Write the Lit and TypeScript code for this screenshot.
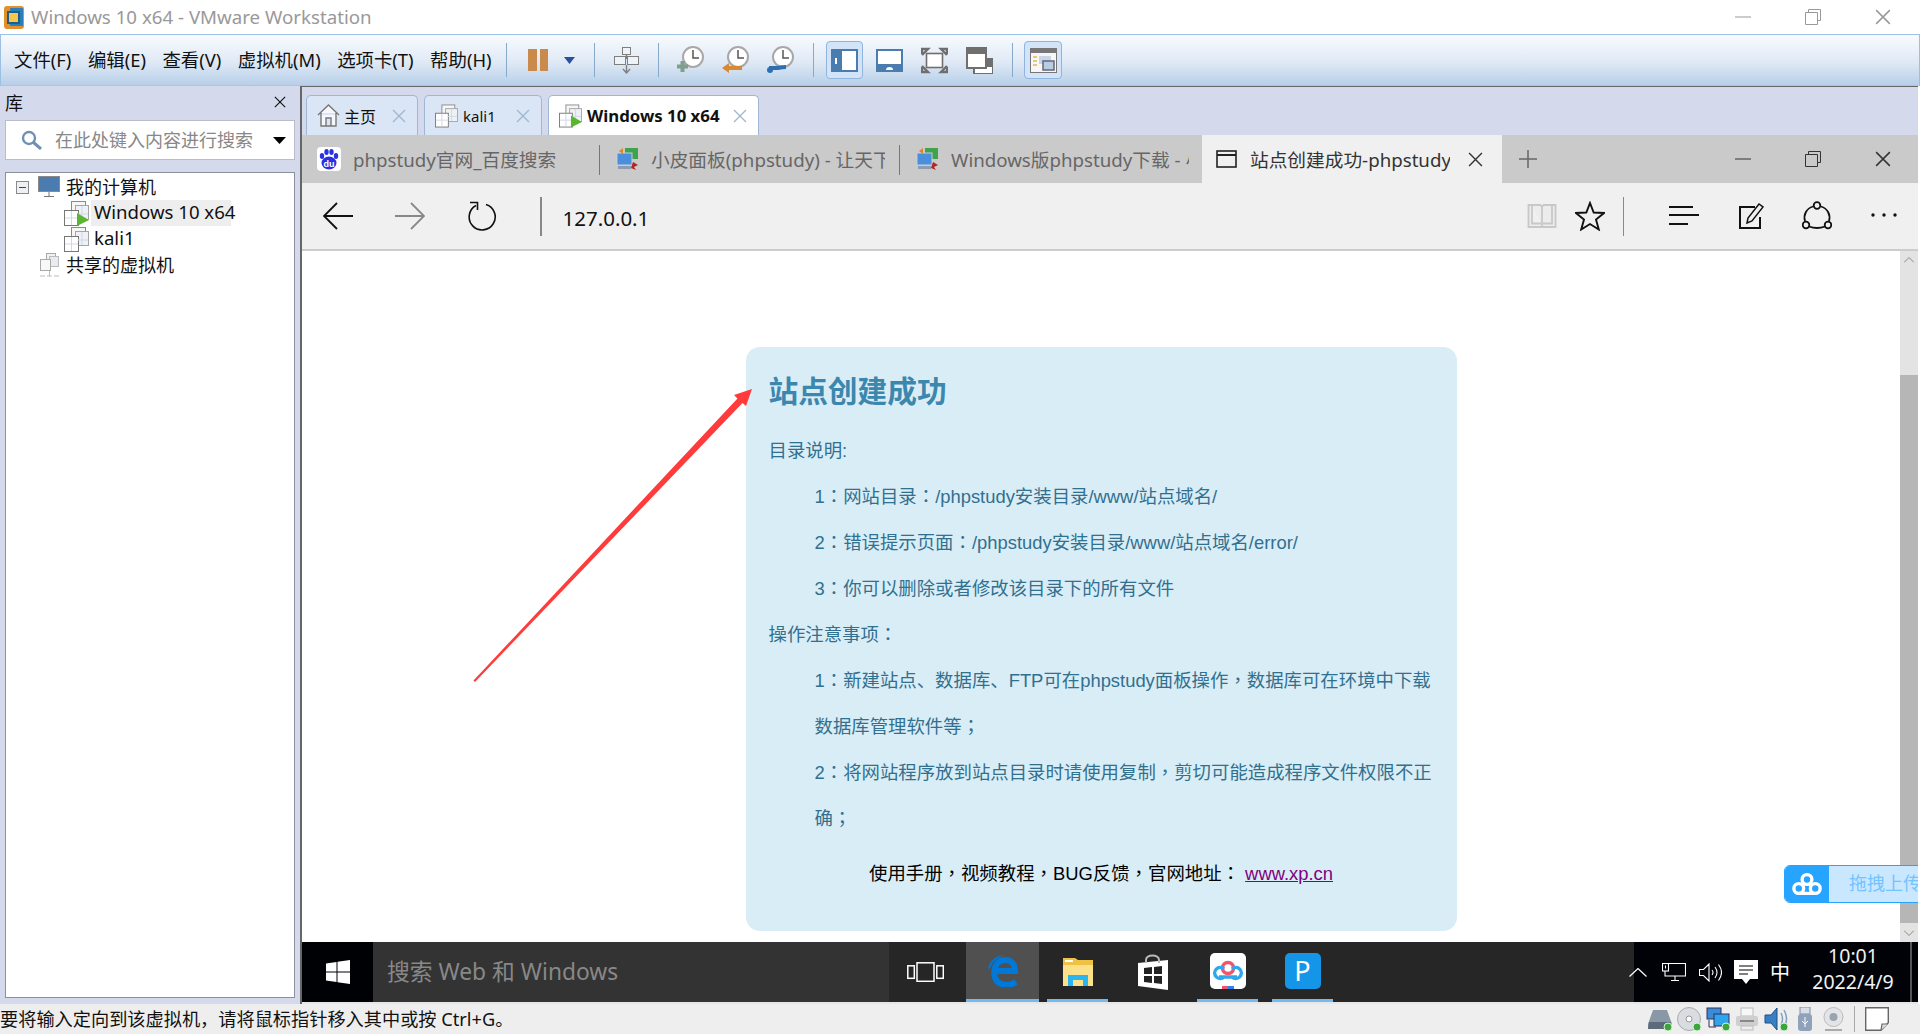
import { LitElement, html, svg, css } from 'lit';
import { customElement } from 'lit/decorators.js';

const vmIcon = (play = false) => html`<svg class="vm-ico" viewBox="0 0 25 25">
  <rect x="7.5" y="0.5" width="14" height="15" fill="#f6f6f6" stroke="#8a8a8a"/>
  <rect x="11.5" y="4.5" width="13" height="14" fill="#eef1f6" stroke="#a5a5a5"/>
  <rect x="0.5" y="9.5" width="14" height="15" fill="#fff" stroke="#777"/>
  <path d="M7.5 10v14M1 17h13M14 13h10M18 5v13" stroke="#cfd8e6" fill="none"/>
  ${play ? svg`<polygon points="13,12 25,19 13,25" fill="#5cb531"/>` : ''}
</svg>`;

const clock = (badge: unknown) => html`<svg class="clock" viewBox="0 0 27 28">
  <circle cx="16" cy="11" r="10" fill="#fff" stroke="#a8a8a8" stroke-width="2"/>
  <path d="M16 4v8h6" fill="none" stroke="#555" stroke-width="1.5"/>
  ${badge}
</svg>`;

const x = (cls = 'tx') => html`<svg class=${cls} viewBox="0 0 14 14"><path d="M1 1l12 12M13 1L1 13" fill="none" stroke="currentColor" stroke-width="1.3"/></svg>`;

const pcIcon = () => html`<svg class="tab-ico" viewBox="0 0 24 24">
  <rect x="10" y="1" width="13" height="11" fill="#3fa34d"/>
  <rect x="2" y="6" width="15" height="12" fill="#4a8fdc" stroke="#ccd" stroke-width="1"/>
  <rect x="3" y="19" width="13" height="3" fill="#8d9cb0"/>
  <path d="M8 1L4 4l4 3z" fill="#d9892b"/>
  <path d="M18 15l5 3-4 2 2 3-5-2z" fill="#b3261e"/>
</svg>`;

const led = svg`<circle cx="20" cy="20" r="4" fill="#3aa63a" stroke="#d8efd8"/>`;

@customElement('app-root')
export class AppRoot extends LitElement {
  static styles = css`
    :host {
      display: block;
      width: 1920px;
      height: 1034px;
      overflow: hidden;
      background: #fff;
      font-family: "Noto Sans", "Noto Sans CJK SC", sans-serif;
      font-size: 18px;
      color: #111;
    }
    svg { display: block; flex: none; }
    .frame { display: flex; flex-direction: column; height: 1034px; }

    .title { height: 34px; display: flex; align-items: center; padding-left: 4px; flex: none; }
    .title .name { margin-left: 7px; color: #999; font-size: 18.7px; white-space: nowrap; padding-bottom: 1px; }
    .winbtns { margin-left: auto; display: flex; padding-right: 2px; }
    .winbtns span { width: 70px; height: 32px; display: flex; align-items: center; justify-content: center; }
    .winbtns svg { width: 16px; height: 16px; color: #999; }
    .strip .winbtns svg { color: #333; }

    .bar {
      height: 52px; flex: none; display: flex; align-items: center; box-sizing: border-box;
      border: 1px solid #9cc0e4; border-bottom-color: #a8c6e6;
      background: linear-gradient(#f8fbfe, #dfe9f5 55%, #b7cfe9);
    }
    .menus { margin-left: 13px; width: 473px; display: flex; gap: 16.5px; white-space: nowrap; flex: none; font-size: 18.4px; padding-bottom: 2px; }
    .sep { width: 1px; height: 34px; background: #89a9c9; margin: 0 19px; flex: none; }
    .pause { width: 24px; height: 24px; }
    .caret { width: 11px; height: 7px; margin-left: 14px; }
    .vmtool { width: 25px; height: 27px; }
    .clocks { display: flex; gap: 18px; margin-left: -1px; }
    .clock { width: 27px; height: 28px; }
    .views { display: flex; align-items: center; margin-left: -7px; }
    .toggled {
      width: 37px; height: 38px; box-sizing: border-box; border: 1px solid #8fb4de; border-radius: 4px;
      background: #d3e4f8; display: flex; align-items: center; justify-content: center;
    }
    .views svg.v { width: 27px; height: 27px; }
    .g13 { margin-left: 13px; }
    .g19 { margin-left: 18px; }
    .last { margin-left: -8px; width: 38px; }

    .main { flex: 1; display: flex; margin-right: 2px; background: #d4d9ec; min-height: 0; }
    .side { width: 300px; flex: none; display: flex; flex-direction: column; }
    .side-head { height: 34px; flex: none; display: flex; align-items: center; justify-content: space-between; padding: 0 14px 2px 5px; box-sizing: border-box; }
    .side-head svg { width: 12px; height: 12px; color: #111; }
    .search {
      height: 40px; flex: none; margin: 0 5px; background: #fff; box-sizing: border-box; border: 1px solid #b9bccb;
      display: flex; align-items: center; padding: 0 8px 0 15px; color: #888;
    }
    .search .mag { width: 21px; height: 20px; margin-right: 13px; }
    .search span { padding-bottom: 2px; }
    .search .drop { width: 13px; height: 7px; margin-left: auto; }
    .tree {
      flex: 1; margin: 12px 5px 6px; background: #fff; box-sizing: border-box; border: 1px solid #8b8f9e; padding-top: 1px;
    }
    .row { height: 26px; display: flex; align-items: center; white-space: nowrap; }
    .row > span { padding-bottom: 2px; box-sizing: border-box; }
    .r1 { padding-left: 10px; }
    .r2 { padding-left: 58px; }
    .r3 { padding-left: 34px; }
    .minus { width: 13px; height: 13px; margin-right: 9px; }
    .pc { width: 22px; height: 22px; margin-right: 6px; }
    .shared { width: 19px; height: 24px; margin-right: 7px; }
    .vm-ico { width: 25px; height: 25px; }
    .lbl { margin-left: 2px; padding: 0 3px; height: 26px; line-height: 24px; font-size: 18.6px; }
    .lbl.sel { background: #eee; width: 140px; }

    .content { flex: 1; min-width: 0; display: flex; flex-direction: column; border-left: 2px solid #666; border-top: 1px solid #666; }
    .tabs { height: 40px; margin-top: 8px; flex: none; display: flex; gap: 6px; padding-left: 4px; }
    .tab {
      box-sizing: border-box; display: flex; align-items: center; padding: 0 11px 0 10px; background: #dae6f5;
      border: 1px solid #9db7d5; border-bottom: none; border-radius: 5px 5px 0 0; font-size: 16px; white-space: nowrap;
    }
    .tab .tx { margin-left: auto; color: #9fb6cf; }
    .tab .vm-ico { width: 23px; height: 24px; margin-right: 5px; }
    .tab .home { width: 23px; height: 23px; margin-right: 4px; }
    .tx { width: 14px; height: 14px; flex: none; }
    .t1 { width: 112px; }
    .t2 { width: 118px; font-size: 15px; }
    .t3 { width: 211px; background: #fff; font-weight: 700; font-size: 16.8px; }

    .vm { flex: 1; min-height: 0; display: flex; flex-direction: column; background: #fff; }
    .strip { height: 48px; flex: none; display: flex; background: #cacaca; font-size: 18.7px; color: #666; }
    .btab { display: flex; align-items: center; box-sizing: border-box; padding-left: 15px; position: relative; }
    .w1 { width: 298px; }
    .w2 { width: 300px; }
    .w3 { width: 302px; }
    .btab::after { content: ""; position: absolute; right: 0; top: 10px; height: 30px; width: 1.5px; background: #777; }
    .btab.w3::after { display: none; }
    .tab-ico { width: 24px; height: 24px; margin-right: 12px; }
    .ttl { overflow: hidden; white-space: nowrap; padding-bottom: 2px; }
    .w1 .ttl { width: 220px; }
    .w2 .ttl { width: 234px; }
    .w3 .ttl { width: 238px; }
    .btab.on { width: 300px; background: #f0f0f0; color: #333; padding-left: 14px; }
    .btab.on::after { display: none; }
    .btab.on .win { width: 21px; height: 18px; margin-right: 13px; }
    .btab.on .ttl { width: 200px; }
    .btab.on .tx { width: 15px; height: 15px; margin-left: 18px; color: #333; }
    .plus { width: 18px; height: 18px; margin-left: 17px; align-self: center; }
    .strip .winbtns { padding-right: 0; align-items: center; }

    .nav { height: 68px; flex: none; box-sizing: border-box; display: flex; align-items: center; background: #f0f0f0; border-bottom: 2px solid #ccc; }
    .navbtn { width: 72px; display: flex; justify-content: center; flex: none; }
    .navbtn svg { width: 30px; height: 30px; }
    .line { width: 1.5px; height: 39px; background: #888; flex: none; }
    .l1 { margin-left: 22px; }
    .url { margin-left: 21px; font-size: 20.5px; color: #111; padding-top: 3px; }
    .right { margin-left: auto; display: flex; align-items: center; }
    .rb { display: flex; justify-content: center; flex: none; }
    .rb svg { width: 30px; height: 30px; }
    .s48 { width: 48px; }
    .s66 { width: 66px; }
    .s68 { width: 68px; }
    .l2 { margin-left: 9px; margin-right: 26px; }

    .page { flex: 1; min-height: 0; display: flex; position: relative; overflow: hidden; }
    .doc { flex: 1; background: #fff; overflow: hidden; }
    .card {
      width: 711px; box-sizing: border-box; margin: 96px auto 0; padding: 22px 23px 34px; border-radius: 14px;
      background: #d9edf7; color: #31708f; font-family: "Liberation Sans", "Noto Sans CJK SC", sans-serif; font-size: 18.4px; line-height: 46px;
    }
    .card h1 { margin: 0 0 13px; height: 46px; font-size: 29.7px; line-height: 46px; font-weight: 700; color: #3c87ad; }
    .card p { margin: 0; height: 46px; white-space: nowrap; }
    .card p.in { padding-left: 46px; }
    .pu { font-family: "Noto Sans CJK TC", sans-serif; line-height: 0; }
    .foot { margin-top: 9px !important; text-align: center; color: #000; }
    .foot a { color: #800080; }
    .arrow { position: absolute; left: 0; top: 0; width: 1598px; height: 691px; pointer-events: none; }
    .upload {
      position: absolute; left: 1482px; top: 614px; width: 160px; height: 38px; display: flex;
      border: 1px solid #26a4ff; border-radius: 6px; box-sizing: border-box; overflow: hidden; background: #c9e8ff;
    }
    .upload .u-ico { width: 44px; flex: none; background: #26a4ff; display: flex; align-items: center; justify-content: center; }
    .upload .u-ico svg { width: 30px; height: 26px; }
    .upload span { margin-left: 20px; line-height: 34px; color: #73c3ff; white-space: nowrap; font-size: 18px; }

    .scroll { width: 18px; flex: none; display: flex; flex-direction: column; background: #e3e3e3; }
    .scroll .end { height: 18px; flex: none; display: flex; align-items: center; justify-content: center; }
    .scroll .end svg { width: 10px; height: 6px; }
    .scroll .space { flex: 1; }
    .scroll .thumb { height: 548px; flex: none; background: #b6b6b6; }
    .scroll .dn { height: 19px; }

    .task { height: 60px; flex: none; display: flex; background: #262626; color: #fff; }
    .start { width: 71px; flex: none; background: #000105; display: flex; align-items: center; justify-content: center; }
    .start svg { width: 24px; height: 24px; }
    .find { width: 516px; flex: none; background: #333; color: #888; font-size: 22.8px; display: flex; align-items: center; padding: 0 0 3px 14px; box-sizing: border-box; white-space: nowrap; }
    .cell { flex: none; display: flex; align-items: center; justify-content: center; box-sizing: border-box; height: 60px; }
    .view { width: 72px; margin-right: 5px; }
    .view svg { width: 37px; height: 20px; }
    .edge { width: 73px; background: #505050; border-bottom: 3px solid #76b9ed; margin-right: 8px; }
    .edge svg { width: 30px; height: 32px; }
    .apps { display: flex; gap: 14px; }
    .app { width: 61px; }
    .app.run { border-bottom: 3px solid #76b9ed; }
    .app svg { width: 36px; height: 36px; }
    .blue { width: 36px; height: 36px; border-radius: 5px; background: #1595e8; color: #fff; font-size: 27px; line-height: 36px; text-align: center; }
    .tray { margin-left: auto; width: 284px; flex: none; background: #000207; display: flex; align-items: center; }
    .tray svg { flex: none; }
    .chev { width: 18px; height: 9px; margin-left: -5px; }
    .net { width: 24px; height: 18px; margin-left: 15px; }
    .spk { width: 23px; height: 19px; margin-left: 13px; }
    .msg { width: 24px; height: 24px; margin-left: 12px; }
    .zh { margin-left: 12px; font-size: 20px; width: 20px; padding-bottom: 2px; }
    .clk { width: 84px; margin-left: 21px; padding-bottom: 6px; text-align: center; font-size: 19.5px; line-height: 26px; color: #f2f2f2; white-space: nowrap; }
    .desk { width: 2px; height: 60px; background: #555; margin-left: 15px; }
    .band { height: 2px; flex: none; background: #e6e6e6; }

    .status { height: 30px; flex: none; display: flex; align-items: center; background: #eee; white-space: nowrap; }
    .status > span { font-size: 18.2px; padding-bottom: 3px; }
    .sicons { margin-left: auto; display: flex; align-items: center; gap: 5px; padding-right: 31px; }
    .sicons svg { width: 24px; height: 24px; }
    .sicons svg.usb { width: 16px; margin: 0 4px; }
    .sicons svg.cam { width: 23px; }
    .bar-sep { width: 1px; height: 26px; background: #aaa; margin: 0 5px 0 4px; }
  `;

  // full-width punctuation sits centred in the reference
  punct(text: string) {
    return text.split(/([：，；])/).map((part) => (/^[：，；]$/.test(part) ? html`<span class="pu">${part}</span>` : part));
  }

  winButtons() {
    return html`<div class="winbtns">
      <span><svg viewBox="0 0 16 16"><path d="M0 8h16" stroke="currentColor" fill="none"/></svg></span>
      <span><svg viewBox="0 0 16 16"><path d="M3.5 3.5V.5h12v11h-3M.5 3.5h12v12H.5z" stroke="currentColor" fill="none"/></svg></span>
      <span>${x('')}</span>
    </div>`;
  }

  renderTopBars() {
    return html`
      <div class="title">
        <svg width="20" height="23" viewBox="0 0 20 23">
          <rect x="0" y="0" width="20" height="23" rx="3" fill="#e2902c"/>
          <rect x="6" y="2" width="13" height="18" rx="1" fill="#2a7fb8"/>
          <rect x="4" y="6" width="11" height="11" fill="#f5c74a" stroke="#1d5d8f" stroke-width="2"/>
        </svg>
        <span class="name">Windows 10 x64 - VMware Workstation</span>
        ${this.winButtons()}
      </div>
      <div class="bar">
        <div class="menus">
          <span>文件(F)</span><span>编辑(E)</span><span>查看(V)</span><span>虚拟机(M)</span><span>选项卡(T)</span><span>帮助(H)</span>
        </div>
        <div class="sep"></div>
        <svg class="pause" viewBox="0 0 24 24"><rect x="2" y="1" width="9" height="22" fill="#c98a4b"/><rect x="14" y="1" width="8" height="22" fill="#c98a4b"/></svg>
        <svg class="caret" viewBox="0 0 11 7"><polygon points="0,0 11,0 5.5,7" fill="#2a4fa0"/></svg>
        <div class="sep"></div>
        <svg class="vmtool" viewBox="0 0 25 27">
          <g fill="#eef3f9" stroke="#7f7f7f"><rect x="8.5" y=".5" width="8" height="7"/><rect x=".5" y="9.5" width="11" height="8"/><rect x="13.5" y="9.5" width="11" height="8"/></g>
          <path d="M12.5 8v4M12.5 18v7M9 22l3.5 4 3.5-4" fill="none" stroke="#7f7f7f" stroke-width="1.4"/>
        </svg>
        <div class="sep"></div>
        <div class="clocks">
          ${clock(svg`<path d="M0 20.5h11M5.5 15v11" stroke="#7fa08d" stroke-width="4"/>`)}
          ${clock(svg`<polygon points="0,22 7,17 7,20 20,20 20,24 7,24 7,27" fill="#d68a35"/>`)}
          ${clock(svg`<path d="M2 22h8c2 0 3-1 9-1" fill="none" stroke="#2f6fb0" stroke-width="4"/><circle cx="3" cy="24" r="3" fill="#2f6fb0"/>`)}
        </div>
        <div class="sep"></div>
        <div class="views">
          <div class="toggled"><svg class="v" viewBox="0 0 27 27"><rect y="2" width="27" height="23" fill="#4a7cb0"/><rect x="11" y="4" width="14" height="19" fill="#fff"/><rect x="4" y="11" width="2" height="6" fill="#fff"/></svg></div>
          <svg class="v g13" viewBox="0 0 27 27"><rect y="2" width="27" height="23" fill="#4a7cb0"/><rect x="2" y="4" width="23" height="13" fill="#fff"/><path d="M10 23a3.5 3 0 0 1 7 0z" fill="#fff"/></svg>
          <svg class="v g19" viewBox="0 0 27 27"><path d="M1 7V2h6L1 8M26 7V2h-6l6 6M1 20v5h6l-6-6M26 20v5h-6l6-6" fill="none" stroke="#6f6f6f" stroke-width="2.4"/><rect x="5.5" y="6.5" width="16" height="14" fill="#fff" stroke="#6f6f6f" stroke-width="1.6"/></svg>
          <svg class="v g19" viewBox="0 0 27 27"><rect x="8" y="12" width="19" height="15" fill="#fff" stroke="#6f6f6f" stroke-width="2"/><rect x="20" y="12" width="7" height="8" fill="#6f6f6f"/><rect x="1" y="1" width="19" height="20" fill="#fff" stroke="#6f6f6f" stroke-width="2"/><rect y="0" width="20" height="7" fill="#6f6f6f"/></svg>
        </div>
        <div class="sep"></div>
        <div class="toggled last"><svg class="v" width="27" height="25" viewBox="0 0 27 25"><rect width="27" height="25" fill="#777"/><rect x="1" y="5" width="25" height="19" fill="#f7f7f7"/><path d="M3 9h4M3 13h4M3 17h4" stroke="#e5b84f" stroke-width="1.6"/><rect x="9" y="8" width="12" height="8" fill="#c7d6e8"/><rect x="13" y="13" width="11" height="9" fill="#b9cce2" stroke="#667" stroke-width="1.5"/></svg></div>
      </div>`;
  }

  renderSidebar() {
    return html`<aside class="side">
      <div class="side-head"><span>库</span>${x('')}</div>
      <div class="search">
        <svg class="mag" viewBox="0 0 21 20"><circle cx="8" cy="8" r="6" fill="none" stroke="#6f8fb5" stroke-width="2.4"/><path d="M12.5 12.5L20 19" stroke="#6f8fb5" stroke-width="3"/></svg>
        <span>在此处键入内容进行搜索</span>
        <svg class="drop" viewBox="0 0 13 7"><polygon points="0,0 13,0 6.5,7" fill="#000"/></svg>
      </div>
      <div class="tree">
        <div class="row r1">
          <svg class="minus" viewBox="0 0 13 13"><rect x=".5" y=".5" width="12" height="12" fill="#eef0f4" stroke="#8a8a8a"/><path d="M3 6.5h7" stroke="#444"/></svg>
          <svg class="pc" viewBox="0 0 22 22"><rect x=".5" y=".5" width="21" height="15" fill="#4a7cb0" stroke="#8a8a8a"/><path d="M11 16v4M6 20.5h10" stroke="#777" fill="none"/></svg>
          <span>我的计算机</span>
        </div>
        <div class="row r2">${vmIcon(true)}<span class="lbl sel">Windows 10 x64</span></div>
        <div class="row r2">${vmIcon()}<span class="lbl">kali1</span></div>
        <div class="row r3">
          <svg class="shared" viewBox="0 0 19 24"><rect x="6.5" y=".5" width="9" height="10" fill="#f2f2f2" stroke="#aaa"/><rect x="9.5" y="3.5" width="9" height="10" fill="#e8ebf2" stroke="#bbb"/><rect x=".5" y="6.5" width="10" height="11" fill="#f8f8f8" stroke="#aaa"/><path d="M0 23h5M7 23h5M14 23h5M9.500 18v5" stroke="#bbb" fill="none"/></svg>
          <span>共享的虚拟机</span>
        </div>
      </div>
    </aside>`;
  }

  renderStrip() {
    return html`<div class="strip">
      <div class="btab w1">
        <svg class="tab-ico" viewBox="0 0 24 24">
          <rect width="24" height="24" rx="4" fill="#fff"/>
          <g fill="#2932e1"><ellipse cx="5" cy="9" rx="2.200" ry="3"/><ellipse cx="9.500" cy="5" rx="2.200" ry="3"/><ellipse cx="14.500" cy="5" rx="2.200" ry="3"/><ellipse cx="19" cy="9" rx="2.200" ry="3"/><ellipse cx="12" cy="16" rx="7.500" ry="6.500"/></g>
          <text x="12" y="20" text-anchor="middle" font-size="9" font-weight="700" fill="#fff" font-family="Liberation Sans">du</text>
        </svg>
        <div class="ttl">phpstudy官网_百度搜索</div>
      </div>
      <div class="btab w2">${pcIcon()}<div class="ttl">小皮面板(phpstudy) - 让天下</div></div>
      <div class="btab w3">${pcIcon()}<div class="ttl">Windows版phpstudy下载 - 小皮</div></div>
      <div class="btab on">
        <svg class="win" viewBox="0 0 21 18"><rect x="1" y="1" width="19" height="16" fill="none" stroke="#222" stroke-width="1.6"/><path d="M1 5h19" stroke="#222" stroke-width="2"/></svg>
        <div class="ttl">站点创建成功-phpstudy</div>
        ${x()}
      </div>
      <svg class="plus" viewBox="0 0 18 18"><path d="M9 0v18M0 9h18" stroke="#666" stroke-width="1.500"/></svg>
      ${this.winButtons()}
    </div>`;
  }

  renderNav() {
    return html`<div class="nav">
      <div class="navbtn"><svg viewBox="0 0 30 30"><path d="M30 15H1M14 2L1 15l13 13" fill="none" stroke="#111" stroke-width="1.800"/></svg></div>
      <div class="navbtn"><svg viewBox="0 0 30 30"><path d="M0 15h29M16 2l13 13-13 13" fill="none" stroke="#888" stroke-width="1.800"/></svg></div>
      <div class="navbtn"><svg viewBox="0 0 30 30"><path d="M9 4.500A13 13 0 1 0 19 3.500M3 1.500h7.500V9" fill="none" stroke="#111" stroke-width="1.600"/></svg></div>
      <div class="line l1"></div>
      <div class="url">127.0.0.1</div>
      <div class="right">
        <div class="rb s48"><svg viewBox="0 0 30 30"><path d="M1.500 4h12l1.500 2 1.500-2h12v22H1.500zM15 6v20M5 3.500v19h9M25 3.500v19h-9" fill="#ececec" stroke="#c8c8c8" stroke-width="1.800"/></svg></div>
        <div class="rb s48"><svg viewBox="0 0 30 30"><polygon points="15,2 18.700,11.500 29,12 21,18.500 23.800,28.500 15,23 6.200,28.500 9,18.500 1,12 11.300,11.500" fill="none" stroke="#111" stroke-width="1.900"/></svg></div>
        <div class="line l2"></div>
        <div class="rb s68"><svg viewBox="0 0 30 30"><path d="M0 6h24M0 14h30M0 23h19" fill="none" stroke="#111" stroke-width="1.800"/></svg></div>
        <div class="rb s66"><svg viewBox="0 0 30 30"><path d="M24 16v11H4V6h15" fill="none" stroke="#111" stroke-width="2"/><path d="M11 22l1-5L23 3l4 3-11 14z" fill="none" stroke="#111" stroke-width="1.500"/></svg></div>
        <div class="rb s66"><svg viewBox="0 0 30 30"><path d="M11 5.500A11.500 11.500 0 0 0 3 20M19 5.500A11.500 11.500 0 0 1 27 20M7 25.500q8 3 16 0" fill="none" stroke="#111" stroke-width="1.800"/><circle cx="15" cy="4.500" r="3.300" fill="none" stroke="#111" stroke-width="1.800"/><circle cx="4" cy="24" r="3.300" fill="none" stroke="#111" stroke-width="1.800"/><circle cx="26" cy="24" r="3.300" fill="none" stroke="#111" stroke-width="1.800"/></svg></div>
        <div class="rb s68"><svg viewBox="0 0 30 30"><g fill="#111"><circle cx="4" cy="14" r="1.700"/><circle cx="15" cy="14" r="1.700"/><circle cx="26" cy="14" r="1.700"/></g></svg></div>
      </div>
    </div>`;
  }

  renderPage() {
    return html`<div class="page">
      <div class="doc">
        <div class="card">
          <h1>站点创建成功</h1>
          <p>目录说明:</p>
          <p class="in">${this.punct('1：网站目录：/phpstudy安装目录/www/站点域名/')}</p>
          <p class="in">${this.punct('2：错误提示页面：/phpstudy安装目录/www/站点域名/error/')}</p>
          <p class="in">${this.punct('3：你可以删除或者修改该目录下的所有文件')}</p>
          <p>${this.punct('操作注意事项：')}</p>
          <p class="in">${this.punct('1：新建站点、数据库、FTP可在phpstudy面板操作，数据库可在环境中下载')}</p>
          <p class="in">${this.punct('数据库管理软件等；')}</p>
          <p class="in">${this.punct('2：将网站程序放到站点目录时请使用复制，剪切可能造成程序文件权限不正')}</p>
          <p class="in">${this.punct('确；')}</p>
          <p class="foot">${this.punct('使用手册，视频教程，BUG反馈，官网地址：')} <a href="#">www.xp.cn</a></p>
        </div>
      </div>
      <div class="scroll">
        <div class="end"><svg viewBox="0 0 10 6"><path d="M0 5.500L5 .5l5 5" fill="none" stroke="#888"/></svg></div>
        <div class="space"></div>
        <div class="thumb"></div>
        <div class="end dn"><svg viewBox="0 0 10 6"><path d="M0 .5l5 5 5-5" fill="none" stroke="#888"/></svg></div>
      </div>
      <svg class="arrow" viewBox="302 251 1598 691"><polygon points="473.500,680.500 737.500,398.500 734,395 752,389 746,406 742.500,403 475,682" fill="#ff3b3b"/></svg>
      <div class="upload">
        <div class="u-ico"><svg viewBox="0 0 40 34"><g fill="none" stroke="#fff" stroke-width="4.500"><circle cx="20" cy="11" r="6.500"/><circle cx="9" cy="23" r="6.500"/><circle cx="31" cy="23" r="6.500"/><path d="M9 29.500h22"/></g></svg></div>
        <span>拖拽上传</span>
      </div>
    </div>`;
  }

  renderTaskbar() {
    return html`<div class="task">
      <div class="start"><svg viewBox="0 0 24 24"><path d="M0 3.500l10.500-1.500v9.500H0zM11.500 1.800L24 0v11.500H11.500zM0 12.500h10.500V22L0 20.500zM11.500 12.500H24V24l-12.500-1.800z" fill="#fff"/></svg></div>
      <div class="find">搜索 Web 和 Windows</div>
      <div class="cell view"><svg viewBox="0 0 37 20" fill="none" stroke="#fff" stroke-width="1.500"><rect x=".8" y="3.800" width="6.500" height="12.500"/><rect x="10" y=".8" width="17" height="18.500"/><rect x="29.800" y="3.800" width="6.500" height="12.500"/></svg></div>
      <div class="cell edge"><svg viewBox="0 0 30 32"><path d="M28 27C20 32 8 31 6.500 20 5.500 11 10 5 17 5c7 0 10 5 10 11H7" fill="none" stroke="#0078d7" stroke-width="6"/><path d="M0 14C2 5 9 0 16 0c-6 2-11 6-14 13z" fill="#0078d7"/></svg></div>
      <div class="apps">
        <div class="cell app run"><svg viewBox="0 0 36 36"><path d="M3 5h12l3 2h15v26H3z" fill="#f0c243"/><path d="M3 12h30v21H3z" fill="#fde08a"/><path d="M8 33v-11h20v11h-5v-6H13v6z" fill="#29b6f0"/><rect x="5" y="7" width="8" height="2" fill="#fff"/></svg></div>
        <div class="cell app"><svg viewBox="0 0 36 36"><path d="M3 9l30-3v30L3 32z" fill="#fff"/><path d="M11 9V6c0-6 13-6 13 0v3" fill="none" stroke="#bbb" stroke-width="2"/><path d="M9 14l8-1v7H9zM19 13l8-1v8h-8zM9 22h8v7l-8-1zM19 22h8v8l-8-1z" fill="#222"/></svg></div>
        <div class="cell app run"><svg viewBox="0 0 36 36"><rect width="36" height="36" rx="5" fill="#fff"/><circle cx="18" cy="15" r="5.500" fill="none" stroke="#f0556b" stroke-width="3.500"/><path d="M14 24a5.500 5.500 0 1 1 0-8M22 24a5.500 5.500 0 1 0 0-8M9 24h18" fill="none" stroke="#2fa7ec" stroke-width="3.500"/><rect x="12" y="33" width="6" height="3" fill="#f0556b"/><rect x="18" y="33" width="6" height="3" fill="#2f7fec"/></svg></div>
        <div class="cell app run"><div class="blue">P</div></div>
      </div>
      <div class="tray">
        <svg class="chev" viewBox="0 0 18 9"><path d="M.5 8.500L9 .5l8.500 8" fill="none" stroke="#fff" stroke-width="1.200"/></svg>
        <svg class="net" viewBox="0 0 24 18" fill="none" stroke="#fff" stroke-width="1.100"><path d="M7 .5h16.500v12.500H3v-5M13 13v4M9 17.500h8"/><rect x=".5" y=".5" width="6" height="7.500"/><path d="M3.500 2.500v3"/></svg>
        <svg class="spk" viewBox="0 0 23 19" fill="none" stroke="#fff" stroke-width="1.100"><path d="M.5 6.500h4L10 1v17l-5.500-5.500h-4zM13 7q2 2.500 0 5M16 4q4 5.500 0 11M19.500 1.500q6 8 0 16"/></svg>
        <svg class="msg" viewBox="0 0 24 24"><path d="M0 0h24v19h-8l-4 5-4-5H0z" fill="#fff"/><path d="M5 6h14M5 10h14M5 14h9" stroke="#000" stroke-width="1.200"/></svg>
        <span class="zh">中</span>
        <div class="clk">10:01<br>2022/4/9</div>
        <div class="desk"></div>
      </div>
    </div>`;
  }

  renderStatus() {
    return html`<div class="status">
      <span>要将输入定向到该虚拟机，请将鼠标指针移入其中或按 Ctrl+G。</span>
      <div class="sicons">
        <svg viewBox="0 0 24 24"><path d="M5 3h14l5 14v5H0v-5z" fill="#8a97a6"/><path d="M1 15h22v7H0z" fill="#5c6b7c"/>${led}</svg>
        <svg viewBox="0 0 24 24"><circle cx="12" cy="12" r="11.500" fill="#d9dde2" stroke="#aaa"/><circle cx="12" cy="12" r="3" fill="#fff" stroke="#999"/>${led}</svg>
        <svg viewBox="0 0 24 24"><rect x="1" y="1" width="14" height="11" fill="#3a8bd8" stroke="#335"/><rect x="8" y="7" width="15" height="12" fill="#2ea3ee" stroke="#335"/><path d="M3 13v7h7" fill="none" stroke="#335"/>${led}</svg>
        <svg viewBox="0 0 24 24"><rect x="6" y="1" width="12" height="8" fill="#f7f7f7" stroke="#bbb"/><rect x="1" y="9" width="22" height="10" rx="2" fill="#cfcfcf"/><rect x="5" y="13" width="14" height="2" fill="#888"/><rect x="6" y="19" width="12" height="4" fill="#eee" stroke="#bbb"/></svg>
        <svg viewBox="0 0 24 24"><path d="M1 8h6l6-7v22l-6-7H1z" fill="#3a7fc4" stroke="#1f4f82"/><path d="M17 6q3 6 0 12M20 3q5 9 0 18" fill="none" stroke="#7f9fc0" stroke-width="1.500"/>${led}</svg>
        <svg class="usb" viewBox="0 0 16 24"><rect x="3" y="0" width="10" height="7" fill="#d8dee6" stroke="#889"/><rect x="1" y="7" width="14" height="17" rx="3" fill="#8ea2ba"/><path d="M8 10v10M5 14l3 3 3-3" fill="none" stroke="#fff"/></svg>
        <svg class="cam" viewBox="0 0 23 24"><circle cx="11.500" cy="10" r="9.500" fill="#e2e4e8" stroke="#bbb"/><circle cx="11.500" cy="10" r="4" fill="#9aa4b0"/><path d="M3 23h17" stroke="#aaa" stroke-width="2"/></svg>
        <div class="bar-sep"></div>
        <svg viewBox="0 0 24 24"><path d="M.7.700h22.600v15L16 23.300H.7z" fill="#fff" stroke="#666" stroke-width="1.400"/><path d="M16 23l1-6h6" fill="#ddd" stroke="#666" stroke-width="1.200"/></svg>
      </div>
    </div>`;
  }

  render() {
    return html`<div class="frame">
      ${this.renderTopBars()}
      <div class="main">
        ${this.renderSidebar()}
        <section class="content">
          <div class="tabs">
            <div class="tab t1">
              <svg class="home" viewBox="0 0 23 23"><path d="M1 11L11.500 1 22 11M4 9v13h15V9M9 22v-8h5v8" fill="#f5f7fa" stroke="#777" stroke-width="1.400"/></svg>
              <span>主页</span>${x()}
            </div>
            <div class="tab t2">${vmIcon()}<span>kali1</span>${x()}</div>
            <div class="tab t3">${vmIcon(true)}<span>Windows 10 x64</span>${x()}</div>
          </div>
          <div class="vm">
            ${this.renderStrip()}
            ${this.renderNav()}
            ${this.renderPage()}
            ${this.renderTaskbar()}
            <div class="band"></div>
          </div>
        </section>
      </div>
      ${this.renderStatus()}
    </div>`;
  }
}
